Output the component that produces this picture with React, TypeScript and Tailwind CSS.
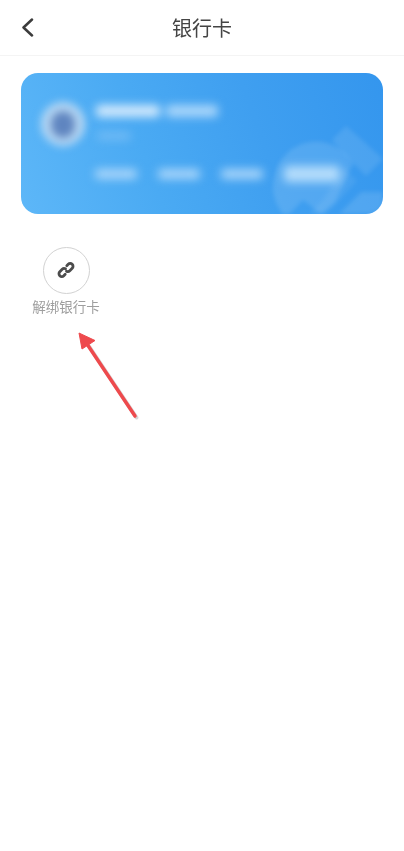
import React from 'react';

const cjk = 'font-["Noto_Sans_CJK_SC","Noto_Sans",sans-serif]';

const CardWatermark: React.FC = () => (
  <svg
    className="absolute inset-0 h-full w-full blur-[2px]"
    viewBox="0 0 362 141"
    fill="none"
    aria-hidden="true"
  >
    <path d="M262 141a42 42 0 0 1-8-40a42 42 0 0 1 78-10l-18 38-14 12-18-14-14 14z" fill="#ffffff" fillOpacity="0.12" />
    <path d="M340 66l22 20-17 17-20-20-14-16 14-14z" fill="#ffffff" fillOpacity="0.1" />
    <path d="M322 94l14 14-22 24-10 9h-16l14-14z" fill="#ffffff" fillOpacity="0.07" />
    <path d="M318 141l22-22h22v8q0 14-14 14z" fill="#ffffff" fillOpacity="0.12" />
  </svg>
);

const Arrow: React.FC = () => (
  <svg
    className="absolute left-[70px] top-[325px] h-[100px] w-[75px]"
    viewBox="0 0 75 100"
    fill="none"
    aria-hidden="true"
  >
    <path d="M65 91L17 19" stroke="#b0b0b0" strokeOpacity="0.5" strokeWidth="4" strokeLinecap="round" transform="translate(1.500 1.500)" />
    <path d="M65 91L17 19" stroke="#ee4a4d" strokeWidth="3.500" strokeLinecap="round" />
    <path d="M9 8L25 15.500L12 24Z" fill="#ee4a4d" stroke="#ee4a4d" strokeWidth="1" strokeLinejoin="round" />
  </svg>
);

const ChainIcon: React.FC = () => (
  <svg className="-mt-[1px] h-[20px] w-[20px] text-[#4c4c4c] blur-[0.4px]" viewBox="0 0 20 20" fill="none" aria-hidden="true">
    <g stroke="currentColor" strokeWidth="2.800" strokeLinecap="round">
      <path d="M10.800 5.700l1.400-1.400a2.800 2.800 0 0 1 4 4l-2.400 2.400a2.800 2.800 0 0 1-3.300.500" />
      <path d="M9.200 14.300l-1.400 1.400a2.800 2.800 0 0 1-4-4l2.400-2.400a2.800 2.800 0 0 1 3.300-.500" />
    </g>
  </svg>
);

export default function App() {
  return (
    <div className={`relative h-[851px] w-[404px] overflow-hidden bg-white ${cjk}`}>
      {/* 顶部标题栏 */}
      <header className="flex h-[56px] items-center border-b border-[#f4f4f4] pl-[20px]">
        <svg className="h-[20px] w-[14px] text-[#3c3c3c]" viewBox="0 0 14 20" fill="none" aria-label="返回">
          <path d="M12 1.500L3.500 9.500l8.500 8" stroke="currentColor" strokeWidth="2.500" strokeLinecap="round" strokeLinejoin="round" />
        </svg>
        <h1 className="ml-[123px] w-[90px] text-center text-[20px] font-normal leading-none text-[#444444] blur-[0.3px]">
          银行卡
        </h1>
      </header>

      {/* 银行卡（内容已打码） */}
      <section className="relative mx-[21px] mt-[17px] h-[141px] overflow-hidden rounded-[17px] bg-[linear-gradient(70deg,#5db7f8_0%,#4aaaf3_35%,#3f9ff0_65%,#3496ee_100%)]">
        <CardWatermark />
        <div className="relative flex pl-[20px] pt-[29px]">
          <div className="flex h-[44px] w-[44px] items-center justify-center rounded-full bg-[#b9d8f3] blur-[4px]">
            <div className="h-[27px] w-[24px] rounded-full bg-[#5f85c0]" />
          </div>
          <div className="ml-[11px] mt-[3px] flex flex-col">
            <div className="flex gap-[6px] blur-[5px]">
              <div className="h-[12px] w-[64px] rounded-sm bg-[#d2e9fc]" />
              <div className="h-[12px] w-[52px] rounded-sm bg-[#aad6fa]" />
            </div>
            <div className="ml-[1px] mt-[15px] h-[8px] w-[34px] rounded-sm bg-[#72bbf5] blur-[5px]" />
          </div>
        </div>
        <div className="relative ml-[74px] mt-[20px] flex items-center gap-[21px] blur-[5px]">
          <div className="h-[10px] w-[42px] rounded-sm bg-[#a8d5fa]" />
          <div className="h-[10px] w-[42px] rounded-sm bg-[#a8d5fa]" />
          <div className="h-[10px] w-[42px] rounded-sm bg-[#a8d5fa]" />
          <div className="h-[16px] w-[56px] rounded-sm bg-[#b4dcfb]" />
        </div>
      </section>

      {/* 解绑入口 */}
      <div className="ml-[32px] mt-[33px] flex w-[68px] flex-col items-center">
        <div className="flex h-[47px] w-[47px] items-center justify-center rounded-full border border-[#d2d2d2]">
          <ChainIcon />
        </div>
        <span className="mt-[3px] whitespace-nowrap text-[13.500px] leading-[18px] text-[#9e9e9e] blur-[0.3px]">解绑银行卡</span>
      </div>

      <Arrow />
    </div>
  );
}
